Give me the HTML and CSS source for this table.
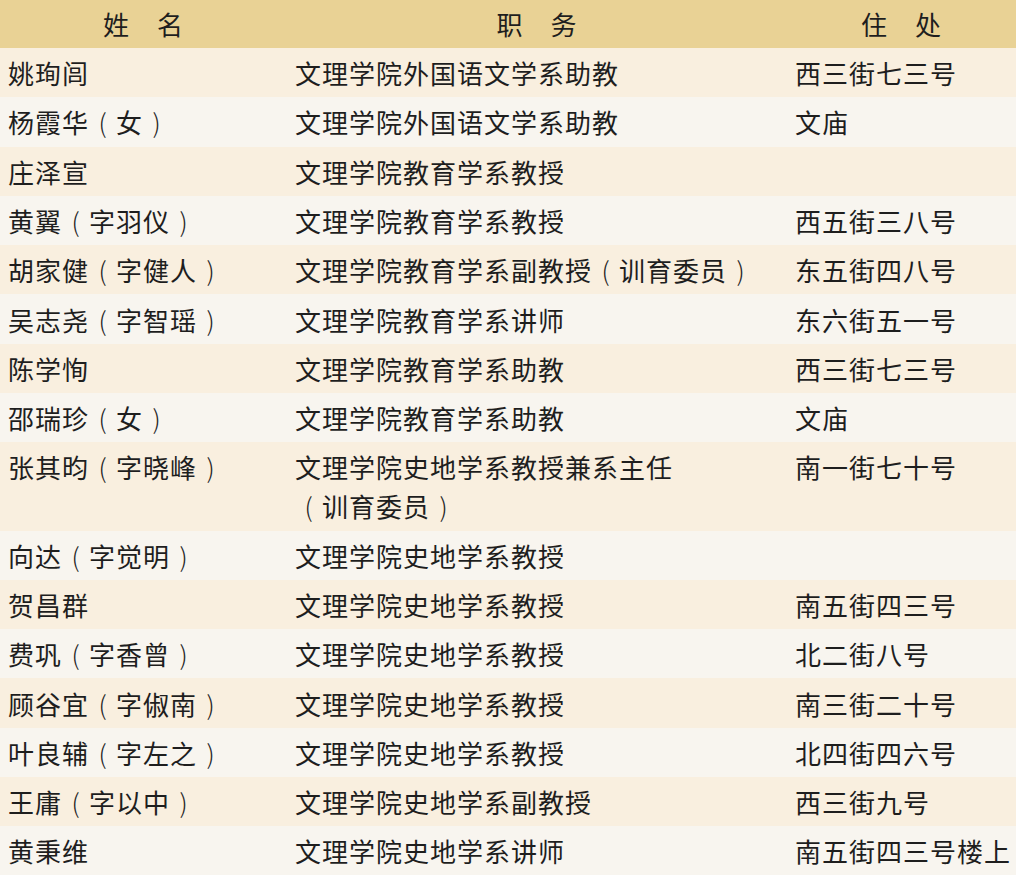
FILE: index.html
```html
<!DOCTYPE html>
<html lang="zh-CN">
<head>
<meta charset="utf-8">
<title>名录</title>
<link rel="stylesheet" href="styles.css">
</head>
<body>
<table class="roster">
  <colgroup>
    <col class="c-name">
    <col class="c-duty">
    <col class="c-addr">
  </colgroup>
  <thead>
    <tr><th>姓　名</th><th>职　务</th><th>住　处</th></tr>
  </thead>
  <tbody>
    <tr><td>姚珣闾</td><td>文理学院外国语文学系助教</td><td>西三街七三号</td></tr>
    <tr><td>杨霞华<span class="p">(</span>女<span class="p">)</span></td><td>文理学院外国语文学系助教</td><td>文庙</td></tr>
    <tr><td>庄泽宣</td><td>文理学院教育学系教授</td><td></td></tr>
    <tr><td>黄翼<span class="p">(</span>字羽仪<span class="p">)</span></td><td>文理学院教育学系教授</td><td>西五街三八号</td></tr>
    <tr><td>胡家健<span class="p">(</span>字健人<span class="p">)</span></td><td>文理学院教育学系副教授<span class="p">(</span>训育委员<span class="p">)</span></td><td>东五街四八号</td></tr>
    <tr><td>吴志尧<span class="p">(</span>字智瑶<span class="p">)</span></td><td>文理学院教育学系讲师</td><td>东六街五一号</td></tr>
    <tr><td>陈学恂</td><td>文理学院教育学系助教</td><td>西三街七三号</td></tr>
    <tr><td>邵瑞珍<span class="p">(</span>女<span class="p">)</span></td><td>文理学院教育学系助教</td><td>文庙</td></tr>
    <tr><td>张其昀<span class="p">(</span>字晓峰<span class="p">)</span></td><td>文理学院史地学系教授兼系主任<br><span class="p">(</span>训育委员<span class="p">)</span></td><td>南一街七十号</td></tr>
    <tr><td>向达<span class="p">(</span>字觉明<span class="p">)</span></td><td>文理学院史地学系教授</td><td></td></tr>
    <tr><td>贺昌群</td><td>文理学院史地学系教授</td><td>南五街四三号</td></tr>
    <tr><td>费巩<span class="p">(</span>字香曾<span class="p">)</span></td><td>文理学院史地学系教授</td><td>北二街八号</td></tr>
    <tr><td>顾谷宜<span class="p">(</span>字俶南<span class="p">)</span></td><td>文理学院史地学系教授</td><td>南三街二十号</td></tr>
    <tr><td>叶良辅<span class="p">(</span>字左之<span class="p">)</span></td><td>文理学院史地学系教授</td><td>北四街四六号</td></tr>
    <tr><td>王庸<span class="p">(</span>字以中<span class="p">)</span></td><td>文理学院史地学系副教授</td><td>西三街九号</td></tr>
    <tr><td>黄秉维</td><td>文理学院史地学系讲师</td><td>南五街四三号楼上</td></tr>
  </tbody>
</table>
</body>
</html>
```
FILE: styles.css
```css
html, body {
  margin: 0;
  padding: 0;
  background: #ffffff;
}

body {
  font-family: "Noto Sans CJK SC", "Noto Sans", sans-serif;
  color: #1e1e1e;
}

.roster {
  width: 1016px;
  border-collapse: collapse;
  table-layout: fixed;
  font-size: 26px;
  letter-spacing: 1px;
}

.c-name { width: 287px; }
.c-duty { width: 500px; }
.c-addr { width: 229px; }

.roster th {
  background: #e9d295;
  font-weight: normal;
  text-align: center;
  height: 48px;
  padding: 0;
  line-height: 48px;
}

.roster td {
  text-align: left;
  vertical-align: top;
  padding: 5.2px 8px 5.1px 8px;
  line-height: 39px;
  white-space: nowrap;
}

.roster .p {
  display: inline-block;
  width: 27px;
  text-align: center;
  letter-spacing: 0;
  font-weight: 300;
}

.roster tbody tr:nth-child(odd) td {
  background: #f9efdf;
}

.roster tbody tr:nth-child(even) td {
  background: #f8f5ef;
}
```
